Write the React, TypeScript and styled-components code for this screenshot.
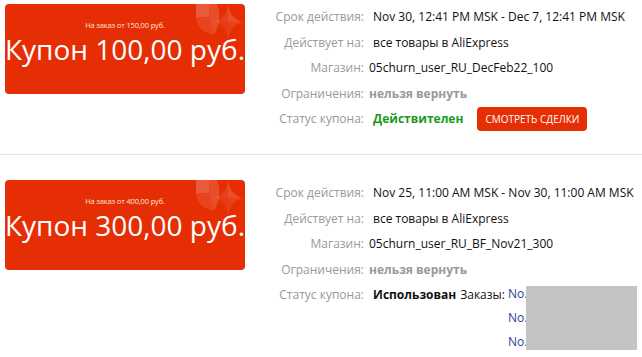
import React from "react";
import styled, { createGlobalStyle } from "styled-components";

const Global = createGlobalStyle`
  html, body { margin: 0; padding: 0; background: #fff; }
  body { font-family: "Open Sans", "Liberation Sans", sans-serif; overflow: hidden; }
`;

const Page = styled.div`
  width: 642px;
`;

const Block = styled.div<{ $first?: boolean }>`
  display: flex;
  align-items: flex-start;
  padding: ${(p) => (p.$first ? "4px 0 22.5px 5px" : "25px 0 0 5px")};
  border-bottom: ${(p) => (p.$first ? "1px solid #e3e3e3" : "none")};
`;

const Card = styled.div`
  position: relative;
  width: 240px;
  height: 90px;
  flex: none;
  background: #e62e04;
  border-radius: 4px;
  overflow: hidden;
  display: flex;
  flex-direction: column;
  align-items: center;
  color: #fff;
`;

const Deco = styled.svg`
  position: absolute;
  top: 0;
  right: 0;
`;

const Min = styled.div`
  margin-top: 16px;
  font-size: 7.5px;
  line-height: 11px;
  color: #ffe2d8;
  letter-spacing: -0.15px;
`;

const Amount = styled.div`
  margin-top: 0;
  font-size: 28px;
  line-height: 36px;
  white-space: nowrap;
`;

const Info = styled.div`
  display: grid;
  grid-template-columns: 119px auto;
  column-gap: 5px;
  font-size: 12px;
`;

const Label = styled.div`
  text-align: right;
  color: #999;
  line-height: 25.5px;
  white-space: nowrap;
`;

const Value = styled.div<{ $inset?: boolean }>`
  color: #111;
  line-height: 25.5px;
  white-space: nowrap;
  padding-left: ${(p) => (p.$inset ? "4px" : "0")};
  display: flex;
  align-items: flex-start;
`;

const Muted = styled.span`
  color: #999;
  font-weight: 700;
`;

const Valid = styled.span`
  color: #1a9a1a;
  font-weight: 700;
`;

const Used = styled.span`
  color: #111;
  font-weight: 700;
  margin-right: 4px;
`;

const Button = styled.button`
  align-self: center;
  margin-left: 14px;
  height: 24px;
  padding: 0 8px;
  border: none;
  border-radius: 4px;
  background: #e62e04;
  color: #fff;
  font-family: "Open Sans", "Liberation Sans", sans-serif;
  font-size: 10px;
  cursor: pointer;
`;

const Orders = styled.div`
  position: relative;
  display: flex;
  flex-direction: column;
  margin-left: 3px;
`;

const OrderLink = styled.a`
  color: #1d4693;
  text-decoration: none;
  line-height: 24px;
`;

const Redact = styled.div`
  position: absolute;
  left: 18px;
  top: 4px;
  width: 111px;
  height: 64px;
  background: #c4c4c4;
`;

const Decoration = () => (
  <Deco width="52" height="40" viewBox="0 0 52 40">
    <path d="M3 0 H24 C28 10 27 22 21 30 C10 30 3 22 3 12 Z" fill="rgba(255,255,255,0.11)" />
    <path d="M3 0 H16 V13 H3 Z" fill="rgba(255,255,255,0.12)" />
    <path d="M16 0 H24 C28 10 27 22 21 30 C18 20 16 10 16 0 Z" fill="rgba(255,255,255,0.05)" />
    <path d="M35 0 Q37 15 50 18 Q37 21 35 36 Q33 21 21 18 Q33 15 35 0 Z" fill="rgba(255,255,255,0.09)" />
    <path d="M35 0 Q37 15 50 18 L35 18 Z" fill="rgba(255,255,255,0.07)" />
    <path d="M35 18 L21 18 Q33 21 35 36 Z" fill="rgba(150,0,0,0.06)" />
  </Deco>
);

type Coupon = {
  min: string;
  amount: string;
  period: string;
  shop: string;
  used: boolean;
};

const coupons: Coupon[] = [
  {
    min: "На заказ от 150,00 руб.",
    amount: "Купон 100,00 руб.",
    period: "Nov 30, 12:41 PM MSK - Dec 7, 12:41 PM MSK",
    shop: "05churn_user_RU_DecFeb22_100",
    used: false,
  },
  {
    min: "На заказ от 400,00 руб.",
    amount: "Купон 300,00 руб.",
    period: "Nov 25, 11:00 AM MSK - Nov 30, 11:00 AM MSK",
    shop: "05churn_user_RU_BF_Nov21_300",
    used: true,
  },
];

export default function App() {
  return (
    <Page>
      <Global />
      {coupons.map((c, i) => (
        <Block key={i} $first={i === 0}>
          <Card>
            <Decoration />
            <Min>{c.min}</Min>
            <Amount>{c.amount}</Amount>
          </Card>
          <Info>
            <Label>Срок действия:</Label>
            <Value $inset>{c.period}</Value>
            <Label>Действует на:</Label>
            <Value $inset>все товары в AliExpress</Value>
            <Label>Магазин:</Label>
            <Value>{c.shop}</Value>
            <Label>Ограничения:</Label>
            <Value>
              <Muted>нельзя вернуть</Muted>
            </Value>
            <Label>Статус купона:</Label>
            {c.used ? (
              <Value $inset>
                <Used>Использован</Used>
                <span>Заказы:</span>
                <Orders>
                  <OrderLink href="#">No.</OrderLink>
                  <OrderLink href="#">No.</OrderLink>
                  <OrderLink href="#">No.</OrderLink>
                  <Redact />
                </Orders>
              </Value>
            ) : (
              <Value $inset>
                <Valid>Действителен</Valid>
                <Button>СМОТРЕТЬ СДЕЛКИ</Button>
              </Value>
            )}
          </Info>
        </Block>
      ))}
    </Page>
  );
}
